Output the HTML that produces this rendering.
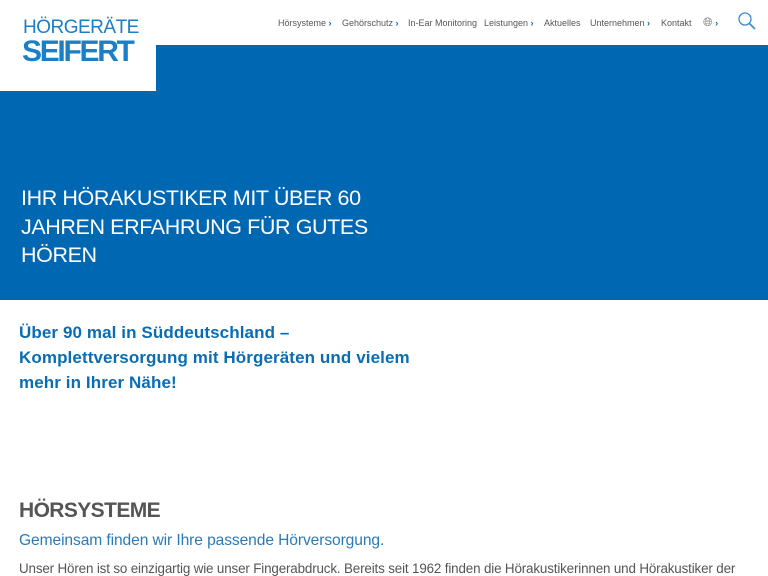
<!DOCTYPE html>
<html><head><meta charset="utf-8"><style>
*{margin:0;padding:0;box-sizing:border-box}
body{width:768px;height:576px;overflow:hidden;background:#fff;font-family:"Liberation Sans",sans-serif;position:relative}
.hero{position:absolute;left:0;top:45px;width:768px;height:255px;background:#0067b3}
.logo{position:absolute;left:0;top:0;width:156px;height:91px;background:#fff;z-index:2}
.l1{position:absolute;left:23px;top:17px;font-size:19px;color:#1a7fc4;letter-spacing:-0.5px}
.l2{position:absolute;left:22px;top:35px;font-size:30px;font-weight:bold;color:#1a7fc4;letter-spacing:-2.3px}
.nav{position:absolute;top:18px;font-size:9px;color:#555;white-space:nowrap}
.nav span{position:absolute}
.ch{color:#0067b3;font-weight:bold}
.h1{position:absolute;left:21px;top:184px;color:#fff;font-size:21.5px;line-height:28.5px;letter-spacing:-0.4px;width:370px}
.sub{position:absolute;left:19px;top:320px;color:#0a6db3;font-weight:bold;font-size:17px;line-height:25px;width:420px;letter-spacing:0.1px}
.h2{position:absolute;left:19px;top:499px;color:#555;font-weight:bold;font-size:21px;letter-spacing:-0.6px}
.h3{position:absolute;left:19px;top:532px;color:#2a7ab8;font-size:15.6px;letter-spacing:-0.1px}
.p{position:absolute;left:19px;top:561px;color:#555;font-size:13.4px;white-space:nowrap;letter-spacing:-0.15px}
</style></head><body>
<div class="hero"></div>
<div class="logo"><div class="l1">HÖRGERÄTE</div><div class="l2">SEIFERT</div></div>
<div class="nav">
<span style="left:278px">Hörsysteme <b class="ch">›</b></span>
<span style="left:342px">Gehörschutz <b class="ch">›</b></span>
<span style="left:408px">In-Ear Monitoring</span>
<span style="left:484px">Leistungen <b class="ch">›</b></span>
<span style="left:544px">Aktuelles</span>
<span style="left:590px">Unternehmen <b class="ch">›</b></span>
<span style="left:661px">Kontakt</span>
<span style="left:703px;top:-3px;font-size:12px;color:#777">🌐︎<b class="ch" style="font-size:9px"> ›</b></span>
</div>
<svg style="position:absolute;left:737px;top:11px" width="20" height="20" viewBox="0 0 20 20"><circle cx="8" cy="8" r="6" fill="none" stroke="#3a8ccc" stroke-width="1.3"/><line x1="12.5" y1="12.5" x2="18" y2="18" stroke="#3a8ccc" stroke-width="1.6"/></svg>
<div class="h1">IHR HÖRAKUSTIKER MIT ÜBER 60 JAHREN ERFAHRUNG FÜR GUTES HÖREN</div>
<div class="sub">Über 90 mal in Süddeutschland – Komplettversorgung mit Hörgeräten und vielem mehr in Ihrer Nähe!</div>
<div class="h2">HÖRSYSTEME</div>
<div class="h3">Gemeinsam finden wir Ihre passende Hörversorgung.</div>
<div class="p">Unser Hören ist so einzigartig wie unser Fingerabdruck. Bereits seit 1962 finden die Hörakustikerinnen und Hörakustiker der</div>
</body></html>
